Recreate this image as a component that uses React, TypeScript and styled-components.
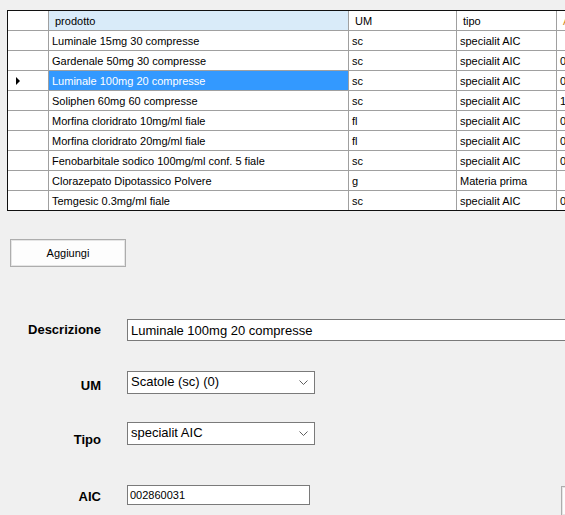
import { FC } from 'react'
import styled, { createGlobalStyle } from 'styled-components'

const GlobalStyle = createGlobalStyle`
    html, body {
        margin: 0;
        padding: 0;
        background: #f0f0f0;
    }
    * {
        box-sizing: border-box;
    }
`

const Window = styled.div`
    width: 565px;
    height: 515px;
    overflow: hidden;
    background: #f0f0f0;
    font-family: "Liberation Sans", Arial, sans-serif;
    color: #000;
    display: flex;
    flex-direction: column;
    padding-top: 10px;
`

const GridBox = styled.div`
    margin-left: 7px;
    width: 620px;
    height: 201px;
    flex-shrink: 0;
    border-top: 1px solid #101010;
    border-left: 1px solid #101010;
    border-bottom: 1px solid #101010;
    background: #ababab;
    overflow: hidden;
`

const GridRow = styled.div`
    display: grid;
    grid-template-columns: 41px 300px 108px 100px 100px;
    height: 20px;
`

const Cell = styled.div<{ $header?: boolean; $active?: boolean; $colSel?: boolean; $accent?: boolean }>`
    height: 20px;
    display: flex;
    align-items: center;
    padding-left: ${p => (p.$header ? '6px' : '3px')};
    font-size: 11px;
    white-space: nowrap;
    overflow: hidden;
    border-right: 1px solid #a0a0a0;
    border-bottom: 1px solid #a0a0a0;
    background: ${p => (p.$active ? '#3399ff' : p.$colSel ? '#d9ebf9' : '#fff')};
    color: ${p => (p.$active ? '#fff' : p.$accent ? '#d08a30' : '#000')};
`

const RowHead = styled.div`
    height: 20px;
    display: flex;
    align-items: center;
    padding-left: 8px;
    background: #fff;
    border-right: 1px solid #a0a0a0;
    border-bottom: 1px solid #a0a0a0;
`

const Pointer = styled.span`
    width: 0;
    height: 0;
    border-top: 4px solid transparent;
    border-bottom: 4px solid transparent;
    border-left: 4px solid #000;
`

const PlainButton = styled.button<{ $width: number }>`
    width: ${p => p.$width}px;
    height: 28px;
    flex-shrink: 0;
    background: #fdfdfd;
    border: 1px solid #adadad;
    box-shadow: inset 0 0 0 1px #e5e5e5;
    font-family: "Liberation Sans", Arial, sans-serif;
    font-size: 11px;
    color: #000;
    padding: 0;
`

const ButtonBar = styled.div`
    display: flex;
    padding-left: 10px;
    margin-top: 28px;
`

const Form = styled.div`
    display: flex;
    flex-direction: column;
    margin-top: 52px;
`

const FieldRow = styled.div<{ $gap: number }>`
    display: flex;
    align-items: flex-start;
    margin-top: ${p => p.$gap}px;
`

const Label = styled.div<{ $drop: number }>`
    width: 101px;
    flex-shrink: 0;
    text-align: right;
    font-weight: bold;
    font-size: 13px;
    padding-top: ${p => p.$drop}px;
`

const TextBox = styled.div<{ $width: number; $height: number; $small?: boolean }>`
    margin-left: 26px;
    width: ${p => p.$width}px;
    height: ${p => p.$height}px;
    flex-shrink: 0;
    background: #fff;
    border: 1px solid #7a7a7a;
    display: flex;
    align-items: center;
    padding-left: ${p => (p.$small ? '2px' : '3px')};
    font-size: ${p => (p.$small ? '11px' : '13px')};
    white-space: nowrap;
`

const Combo = styled.div`
    margin-left: 26px;
    width: 188px;
    height: 23px;
    flex-shrink: 0;
    background: #fff;
    border: 1px solid #7a7a7a;
    display: flex;
    align-items: flex-start;
    justify-content: space-between;
    padding: 2px 6px 0 3px;
    font-size: 13px;
`

const Chevron = styled.svg`
    margin-top: 6px;
`

const SideButton = styled(PlainButton)`
    margin-left: 251px;
    margin-top: 1px;
    height: 30px;
`

type Row = { nome: string; um: string; tipo: string; aic: string }

const rows: Row[] = [
    { nome: 'Luminale 15mg 30 compresse', um: 'sc', tipo: 'specialit AIC', aic: '' },
    { nome: 'Gardenale 50mg 30 compresse', um: 'sc', tipo: 'specialit AIC', aic: '0' },
    { nome: 'Luminale 100mg 20 compresse', um: 'sc', tipo: 'specialit AIC', aic: '0' },
    { nome: 'Soliphen 60mg 60 compresse', um: 'sc', tipo: 'specialit AIC', aic: '1' },
    { nome: 'Morfina cloridrato 10mg/ml fiale', um: 'fl', tipo: 'specialit AIC', aic: '0' },
    { nome: 'Morfina cloridrato 20mg/ml fiale', um: 'fl', tipo: 'specialit AIC', aic: '0' },
    { nome: 'Fenobarbitale sodico 100mg/ml conf. 5 fiale', um: 'sc', tipo: 'specialit AIC', aic: '0' },
    { nome: 'Clorazepato Dipotassico Polvere', um: 'g', tipo: 'Materia prima', aic: '' },
    { nome: 'Temgesic 0.3mg/ml fiale', um: 'sc', tipo: 'specialit AIC', aic: '0' },
]

const selected = 2

const ChevronIcon: FC = () => (
    <Chevron width="9" height="6" viewBox="0 0 9 6">
        <path d="M0.5 0.5 L4.5 4.5 L8.5 0.5" fill="none" stroke="#606060" strokeWidth="1" />
    </Chevron>
)

const App: FC = () => {
    return (
        <Window>
            <GlobalStyle />
            <GridBox>
                <GridRow>
                    <RowHead />
                    <Cell $header $colSel>prodotto</Cell>
                    <Cell $header>UM</Cell>
                    <Cell $header>tipo</Cell>
                    <Cell $header $accent>AIC</Cell>
                </GridRow>
                {rows.map((r, i) => (
                    <GridRow key={r.nome}>
                        <RowHead>{i === selected && <Pointer />}</RowHead>
                        <Cell $active={i === selected}>{r.nome}</Cell>
                        <Cell>{r.um}</Cell>
                        <Cell>{r.tipo}</Cell>
                        <Cell>{r.aic}</Cell>
                    </GridRow>
                ))}
            </GridBox>

            <ButtonBar>
                <PlainButton $width={116}>Aggiungi</PlainButton>
            </ButtonBar>

            <Form>
                <FieldRow $gap={0}>
                    <Label $drop={3}>Descrizione</Label>
                    <TextBox $width={480} $height={22}>Luminale 100mg 20 compresse</TextBox>
                </FieldRow>
                <FieldRow $gap={30}>
                    <Label $drop={7}>UM</Label>
                    <Combo>
                        <span>Scatole (sc) (0)</span>
                        <ChevronIcon />
                    </Combo>
                </FieldRow>
                <FieldRow $gap={28}>
                    <Label $drop={10}>Tipo</Label>
                    <Combo>
                        <span>specialit AIC</span>
                        <ChevronIcon />
                    </Combo>
                </FieldRow>
                <FieldRow $gap={38}>
                    <Label $drop={4}>AIC</Label>
                    <TextBox $width={183} $height={20} $small>002860031</TextBox>
                    <SideButton $width={80} />
                </FieldRow>
            </Form>
        </Window>
    )
}

export default App
